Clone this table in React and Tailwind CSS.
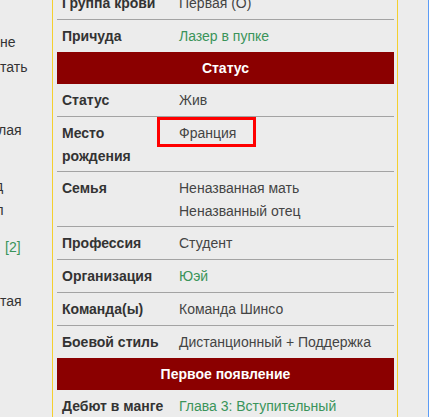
import React from "react";

const GREEN = "text-[#3a945a]";

function Row({ label, children, border = true, pb = "pb-[4px]" }) {
  return (
    <div
      className={`grid grid-cols-[117px_1fr] ${border ? "border-b border-[#a3a3a3]" : ""}`}
    >
      <div className={`pl-[5px] pt-[5px] ${pb} leading-[23px] font-bold text-[#333333]`}>
        {label}
      </div>
      <div className={`pl-[5px] pt-[5px] ${pb} leading-[23px] text-[#444444]`}>
        {children}
      </div>
    </div>
  );
}

function Header({ children }) {
  return (
    <div className="h-[32px] bg-[#8b0000] flex items-center justify-center font-bold text-white">
      {children}
    </div>
  );
}

export default function App() {
  return (
    <div
      className="w-[429px] h-[417px] overflow-hidden bg-[#ececec] flex text-[14px]"
      style={{ fontFamily: '"Liberation Sans", Arial, sans-serif' }}
    >
      {/* left clipped article column */}
      <div className="w-[52px] shrink-0 overflow-hidden text-[#333333] whitespace-nowrap">
        <div className="mt-[30px] h-[24px] leading-[24px]">не</div>
        <div className="mt-[1px] h-[24px] leading-[24px]">тать</div>
        <div className="mt-[39px] h-[24px] leading-[24px] ml-[-2px]">лая</div>
        <div className="mt-[32px] h-[24px] leading-[24px] ml-[-5px]">д</div>
        <div className="mt-0 h-[24px] leading-[24px] ml-[-4px]">п</div>
        <div className="mt-[13px] h-[24px] leading-[24px] pl-[5px]">
          <span className={GREEN}>[2]</span>
        </div>
        <div className="mt-[-8px] h-[24px] leading-[24px] ml-[-4px]">.</div>
        <div className="mt-[14px] h-[24px] leading-[24px]">тая</div>
      </div>

      {/* infobox container */}
      <div className="w-[346px] shrink-0 border-x border-[#f4d02e] pl-[4px] pr-[3px]">
        <div className="relative mt-[-13px]">
          <Row label="Группа крови">Первая (O)</Row>
          <Row label="Причуда" border={false}>
            <span className={GREEN}>Лазер в пупке</span>
          </Row>
          <Header>Статус</Header>
          <Row label="Статус">Жив</Row>
          <div className="relative">
            <Row label={<>Место<br />рождения</>} pb="pb-[3px]">
              Франция
            </Row>
            <div className="absolute left-[100px] top-[0px] w-[99px] h-[30px] border-[3px] border-[#ff0000] pointer-events-none" />
          </div>
          <Row label="Семья" pb="pb-[3px]">
            Неназванная мать
            <br />
            Неназванный отец
          </Row>
          <Row label="Профессия">Студент</Row>
          <Row label="Организация">
            <span className={GREEN}>Юэй</span>
          </Row>
          <Row label="Команда(ы)">Команда Шинсо</Row>
          <Row label="Боевой стиль" border={false}>
            Дистанционный + Поддержка
          </Row>
          <Header>Первое появление</Header>
          <Row label="Дебют в манге" border={false}>
            <span className={GREEN}>Глава 3: Вступительный</span>
          </Row>
        </div>
      </div>

      <div className="w-[30px] shrink-0" />
      <div className="w-[1px] shrink-0 bg-[#5b9cf6]" />
    </div>
  );
}
